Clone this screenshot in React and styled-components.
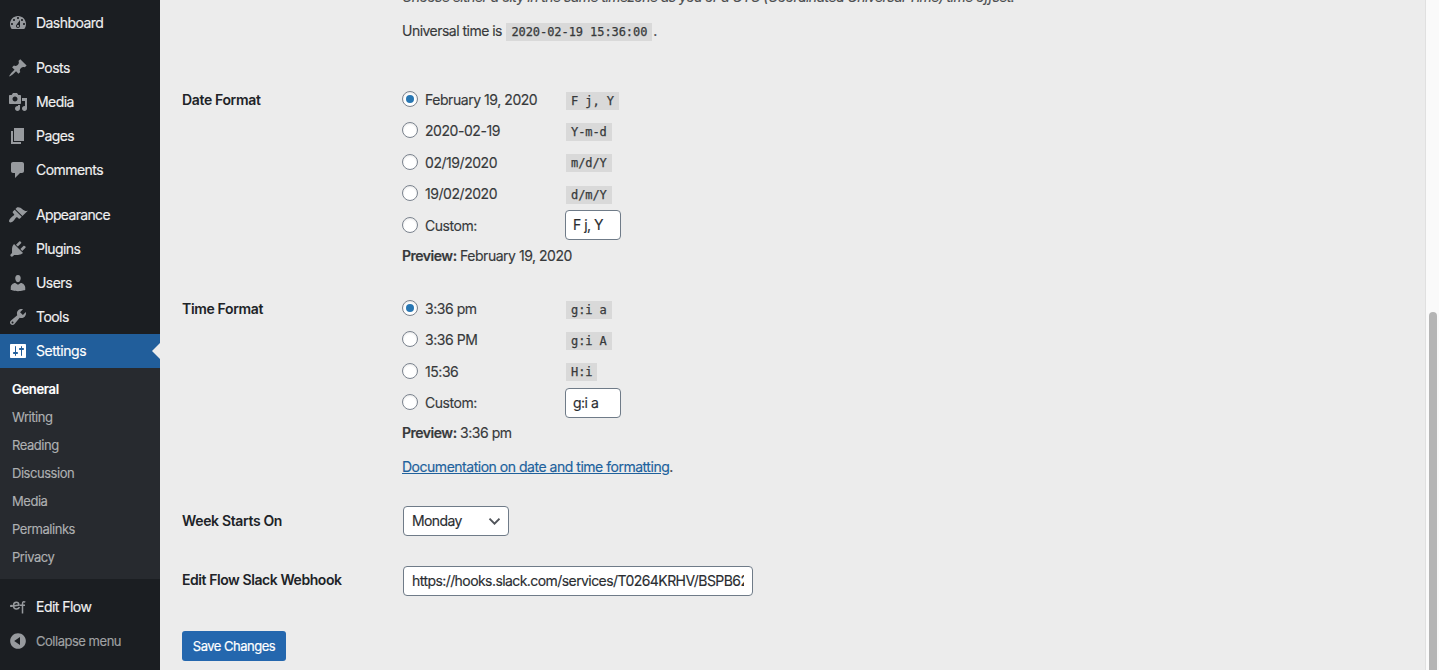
import React from 'react';
import styled, { createGlobalStyle, css } from 'styled-components';

const GlobalStyle = createGlobalStyle`
  * { box-sizing: border-box; }
  body {
    margin: 0;
    background: #ececec;
    color: #37393b;
    font-family: Inter, "Liberation Sans", sans-serif;
    font-size: 14px;
    line-height: 20px;
    letter-spacing: -0.48px;
    -webkit-text-stroke: 0.15px currentColor;
    overflow: hidden;
  }
`;

const Page = styled.div`
  display: flex;
  height: 670px;
  overflow: hidden;
`;

const Sidebar = styled.nav`
  flex: none;
  width: 160px;
  padding-top: 6px;
  background: #1b1e22;
`;

const MenuItem = styled.a`
  display: flex;
  align-items: center;
  position: relative;
  height: 34px;
  padding-left: 8px;
  gap: 8px;
  color: ${(p) => (p.$muted ? '#a0a2a4' : '#f0f0f1')};
  font-size: ${(p) => (p.$muted ? '13px' : '14px')};
  letter-spacing: ${(p) => p.$track || '-0.55px'};
  margin-top: ${(p) => (p.$spaced ? '11px' : '0')};
  ${(p) => p.$active && css`
    background: #215e9b;
    color: #fff;
    letter-spacing: -0.42px;
    &::after {
      content: '';
      position: absolute;
      right: 0;
      top: 9px;
      border: 8px solid transparent;
      border-right-color: #ececec;
      border-left: 0;
    }
  `}
`;

const MenuIcon = styled.svg`
  width: 20px;
  height: 20px;
  flex: none;
  fill: ${(p) => (p.$active ? '#fff' : '#979a9e')};
`;

const Submenu = styled.div`
  padding: 7px 0 8px;
  background: #272a2f;
`;

const SubItem = styled.a`
  display: block;
  padding: 4px 12px;
  height: 28px;
  font-size: 13px;
  letter-spacing: -0.46px;
  color: #aeb0b2;
  ${(p) => p.$current && css`
    color: #fff;
    font-weight: 600;
    letter-spacing: -0.3px;
  `}
`;

const Content = styled.main`
  flex: 1;
  padding-left: 22px;
  min-width: 0;
`;

const Description = styled.p`
  margin: -13px 0 0 220px;
  font-style: italic;
  color: #4c4e50;
  letter-spacing: -0.55px;
`;

const UniversalTime = styled.p`
  margin: 14px 0 0 220px;
  letter-spacing: -0.52px;
`;

const FormRow = styled.section`
  display: grid;
  grid-template-columns: 220px 1fr;
  margin-top: ${(p) => p.$top}px;
`;

const RowTitle = styled.h2`
  margin: ${(p) => p.$offset || 0}px 0 0;
  font-size: 14px;
  line-height: 20px;
  font-weight: 600;
  letter-spacing: ${(p) => p.$track || '-0.35px'};
  -webkit-text-stroke: 0;
  color: #202327;
`;

const Option = styled.label`
  display: flex;
  align-items: center;
  height: 31.4px;
`;

const Radio = styled.span`
  display: flex;
  align-items: center;
  justify-content: center;
  width: 16px;
  height: 16px;
  margin: -2px 7px 0 0;
  border: 1px solid #7a828d;
  border-radius: 50%;
  background: #fff;
  box-shadow: inset 0 1px 2px rgba(0, 0, 0, 0.1);
  &::after {
    content: '';
    width: 8px;
    height: 8px;
    border-radius: 50%;
    background: ${(p) => (p.$checked ? '#2877b3' : 'transparent')};
  }
`;

const OptionText = styled.span`
  width: 141px;
  letter-spacing: -0.45px;
`;

const Code = styled.code`
  display: inline-block;
  height: 18px;
  padding: 0 5px;
  margin: ${(p) => (p.$inline ? '0 1px' : '1.2px 0 0')};
  background: #d9d9d9;
  font-family: "DejaVu Sans Mono", monospace;
  font-size: 12px;
  line-height: 19px;
  letter-spacing: -0.07px;
  -webkit-text-stroke: 0.25px currentColor;
  white-space: pre;
`;

const Field = styled.div`
  height: 30px;
  width: ${(p) => p.$width}px;
  margin-left: ${(p) => p.$shift || 0}px;
  padding: 0 8px;
  display: flex;
  align-items: center;
  justify-content: space-between;
  border: 1px solid #6f7b88;
  border-radius: 4px;
  background: #fff;
  color: #2a2d31;
  letter-spacing: ${(p) => p.$track || '-0.5px'};
`;

const SmallField = styled(Field)`
  padding: 0 7px;
  margin-top: -0.8px;
`;

const FieldText = styled.span`
  flex: 1;
  overflow: hidden;
  white-space: nowrap;
`;

const Preview = styled.p`
  margin: 4.4px 0 0;
  strong { font-weight: 600; }
`;

const DocLine = styled.p`
  margin: 13.8px 0 0;
  a {
    color: #20619c;
    text-decoration: underline;
  }
`;

const SaveButton = styled.button`
  display: block;
  margin-top: 35px;
  width: 104px;
  height: 30px;
  padding: 0;
  border: 0;
  border-radius: 3px;
  background: #2467ae;
  color: #fff;
  font: 400 13px/30px Inter, sans-serif;
  letter-spacing: -0.5px;
  -webkit-text-stroke: 0.2px currentColor;
`;

const ScrollTrack = styled.div`
  flex: none;
  width: 14px;
  padding: 312px 0 0 3px;
  border-left: 1px solid #e0e0e0;
  background: #fafafa;
`;

const ScrollThumb = styled.div`
  width: 8px;
  height: 400px;
  border-radius: 4px;
  background: #b5b5b5;
`;

const icons = {
  dashboard: 'M3.76 16h12.48c1.1-1.37 1.76-3.11 1.76-5 0-4.42-3.58-8-8-8s-8 3.58-8 8c0 1.89.66 3.63 1.76 5zM10 4c.55 0 1 .45 1 1s-.45 1-1 1-1-.45-1-1 .45-1 1-1zM6 6c.55 0 1 .45 1 1s-.45 1-1 1-1-.45-1-1 .45-1 1-1zm8 0c.55 0 1 .45 1 1s-.45 1-1 1-1-.45-1-1 .45-1 1-1zm-5.37 5.55L12 7v6c0 1.1-.9 2-2 2s-2-.9-2-2c0-.57.24-1.08.63-1.45zM4 10c.55 0 1 .45 1 1s-.45 1-1 1-1-.45-1-1 .45-1 1-1zm12 0c.55 0 1 .45 1 1s-.45 1-1 1-1-.45-1-1 .45-1 1-1zm-5 3c0-.55-.45-1-1-1s-1 .45-1 1 .45 1 1 1 1-.45 1-1z',
  pin: 'M10.44 3.02l1.82-1.82 6.36 6.35-1.83 1.82c-1.05-.68-2.48-.57-3.41.36l-.75.75c-.92.93-1.04 2.35-.35 3.41l-1.83 1.82-2.41-2.41-2.8 2.79c-.42.42-3.38 2.71-3.8 2.29s1.86-3.39 2.28-3.81l2.79-2.79L4.1 9.36l1.83-1.82c1.05.69 2.48.57 3.4-.36l.75-.75c.93-.92 1.05-2.35.36-3.41z',
  media: 'M13 11V4c0-.55-.45-1-1-1h-1.67L9 1H5L3.67 3H2c-.55 0-1 .45-1 1v7c0 .55.45 1 1 1h10c.55 0 1-.45 1-1zM7 4.5c1.38 0 2.5 1.12 2.5 2.5S8.38 9.5 7 9.5 4.5 8.38 4.5 7 5.62 4.5 7 4.5zM14 6h5v10.5c0 1.38-1.12 2.5-2.5 2.5S14 17.88 14 16.5s1.12-2.5 2.5-2.5c.17 0 .34.02.5.05V9h-3V6zm-4 8.05V13h2v3.5c0 1.38-1.12 2.5-2.5 2.5S7 17.88 7 16.5 8.12 14 9.5 14c.17 0 .34.02.5.05z',
  page: 'M6 15V2h10v13H6zm-1 1h8v2H3V5h2v11z',
  comment: 'M5 2h9c1.1 0 2 .9 2 2v7c0 1.1-.9 2-2 2h-2l-5 5v-5H5c-1.1 0-2-.9-2-2V4c0-1.1.9-2 2-2z',
  appearance: 'M14.48 11.06L7.41 3.99l1.5-1.5c.5-.56 2.3-.47 3.51.32 1.21.8 1.43 1.28 2.91 2.1 1.18.64 2.45 1.26 4.45.85zm-.71.71L6.7 4.7 4.93 6.47c-.39.39-.39 1.02 0 1.41l1.06 1.06c.39.39.39 1.03 0 1.42-.6.6-1.43 1.11-2.21 1.69-.35.26-.7.53-1.01.84C1.43 14.23.4 16.08 1.4 17.07c.99 1 2.84-.03 4.18-1.36.31-.31.58-.66.85-1.02.57-.78 1.08-1.61 1.69-2.21.39-.39 1.02-.39 1.41 0l1.06 1.06c.39.39 1.02.39 1.41 0z',
  plugins: 'M13.11 4.36L9.87 7.6 8 5.73l3.24-3.24c.35-.34 1.05-.2 1.56.32.52.51.66 1.21.31 1.55zm-8 1.77l.91-1.12 9.01 9.01-1.19.84c-.71.71-2.63 1.16-3.82 1.16H6.14L4.9 17.26c-.59.59-1.54.59-2.12 0-.59-.58-.59-1.53 0-2.12l1.24-1.24v-3.88c0-1.13.4-3.19 1.09-3.89zm7.26 3.97l3.24-3.24c.34-.35 1.04-.21 1.55.31.52.51.66 1.21.31 1.55l-3.24 3.25z',
  users: 'M10 9.25c-2.27 0-2.73-3.44-2.73-3.44C7 4.02 7.82 2 9.97 2c2.16 0 2.98 2.02 2.71 3.81 0 0-.41 3.44-2.68 3.44zm0 2.57L12.72 10c2.39 0 4.52 2.33 4.52 4.53v2.49s-3.65 1.13-7.24 1.13c-3.65 0-7.24-1.13-7.24-1.13v-2.49c0-2.25 1.94-4.48 4.47-4.48z',
  tools: 'M16.68 9.77c-1.34 1.34-3.3 1.67-4.95.99l-5.41 6.52c-.99.99-2.59.99-3.58 0s-.99-2.59 0-3.57l6.52-5.42c-.68-1.65-.35-3.61.99-4.95 1.28-1.28 3.12-1.62 4.72-1.06l-2.89 2.89 2.82 2.82 2.86-2.87c.53 1.58.18 3.39-1.08 4.65zM3.81 16.21c.4.39 1.04.39 1.43 0 .4-.4.4-1.04 0-1.43-.39-.4-1.03-.4-1.43 0-.39.39-.39 1.03 0 1.43z',
  settings: 'M18 16V4c0-.55-.45-1-1-1H3c-.55 0-1 .45-1 1v12c0 .55.45 1 1 1h14c.55 0 1-.45 1-1zM8 11h1c.55 0 1 .45 1 1s-.45 1-1 1H8v1.5c0 .28-.22.5-.5.5s-.5-.22-.5-.5V13H6c-.55 0-1-.45-1-1s.45-1 1-1h1V5.5c0-.28.22-.5.5-.5s.5.22.5.5V11zm5-2h-1c-.55 0-1-.45-1-1s.45-1 1-1h1V5.5c0-.28.22-.5.5-.5s.5.22.5.5V7h1c.55 0 1 .45 1 1s-.45 1-1 1h-1v5.5c0 .28-.22.5-.5.5s-.5-.22-.5-.5V9z',
  collapse: 'M10 2.16c4.33 0 7.84 3.51 7.84 7.84s-3.51 7.84-7.84 7.84S2.16 14.33 2.16 10 5.71 2.16 10 2.16zm2 11.72V6.12L6.18 9.97z',
};

const menu = [
  { label: 'Dashboard', icon: 'dashboard' },
  { label: 'Posts', icon: 'pin', spaced: true },
  { label: 'Media', icon: 'media' },
  { label: 'Pages', icon: 'page' },
  { label: 'Comments', icon: 'comment' },
  { label: 'Appearance', icon: 'appearance', spaced: true, track: '-0.66px' },
  { label: 'Plugins', icon: 'plugins' },
  { label: 'Users', icon: 'users' },
  { label: 'Tools', icon: 'tools' },
  { label: 'Settings', icon: 'settings', active: true },
];

const submenu = ['General', 'Writing', 'Reading', 'Discussion', 'Media', 'Permalinks', 'Privacy'];

const dateOptions = [
  ['February 19, 2020', 'F j, Y'],
  ['2020-02-19', 'Y-m-d'],
  ['02/19/2020', 'm/d/Y'],
  ['19/02/2020', 'd/m/Y'],
];

const timeOptions = [
  ['3:36 pm', 'g:i a'],
  ['3:36 PM', 'g:i A'],
  ['15:36', 'H:i'],
];

function FormatOptions({ options, custom, preview }) {
  return (
    <div>
      {options.map(([text, code], i) => (
        <Option key={code}>
          <Radio $checked={i === 0} />
          <OptionText>{text}</OptionText>
          <Code>{code}</Code>
        </Option>
      ))}
      <Option>
        <Radio />
        <OptionText>Custom:</OptionText>
        <SmallField $width={56} $shift={-1}>
          <FieldText>{custom}</FieldText>
        </SmallField>
      </Option>
      <Preview><strong>Preview:</strong> {preview}</Preview>
    </div>
  );
}

export default function App() {
  return (
    <Page>
      <GlobalStyle />
      <Sidebar>
        {menu.map((m) => (
          <MenuItem key={m.label} $spaced={m.spaced} $active={m.active} $track={m.track}>
            <MenuIcon viewBox="0 0 20 20" $active={m.active}><path d={icons[m.icon]} /></MenuIcon>
            {m.label}
          </MenuItem>
        ))}
        <Submenu>
          {submenu.map((s, i) => <SubItem key={s} $current={i === 0}>{s}</SubItem>)}
        </Submenu>
        <MenuItem $spaced $track="-0.53px">
          <MenuIcon viewBox="0 0 20 20">
            <g fill="none" stroke="#979a9e" strokeWidth="1.5">
              <path d="M2.4 8.9H5.4L11 8.1C10.8 6.3 9.7 5.3 8.4 5.3C6.7 5.3 5.5 6.7 5.5 8.7C5.5 10.7 6.7 12 8.5 12C9.9 12 10.9 11.3 11.5 10.2" />
              <path d="M17.3 5.2C15.5 4.2 14.5 5 14.5 7V16.4M12 8.3H17" />
            </g>
            <circle cx="3.3" cy="8.9" r="1.2" />
          </MenuIcon>
          Edit Flow
        </MenuItem>
        <MenuItem $muted $track="-0.48px">
          <MenuIcon viewBox="0 0 20 20"><path d={icons.collapse} /></MenuIcon>
          Collapse menu
        </MenuItem>
      </Sidebar>
      <Content>
        <Description>
          Choose either a city in the same timezone as you or a UTC (Coordinated Universal Time) time offset.
        </Description>
        <UniversalTime>
          Universal time is <Code $inline>2020-02-19 15:36:00</Code>.
        </UniversalTime>
        <FormRow $top={43.35}>
          <RowTitle $offset={5.65}>Date Format</RowTitle>
          <FormatOptions options={dateOptions} custom="F j, Y" preview="February 19, 2020" />
        </FormRow>
        <FormRow $top={27.6}>
          <RowTitle $offset={5.6}>Time Format</RowTitle>
          <div>
            <FormatOptions options={timeOptions} custom="g:i a" preview="3:36 pm" />
            <DocLine><a>Documentation on date and time formatting</a>.</DocLine>
          </div>
        </FormRow>
        <FormRow $top={29}>
          <RowTitle $offset={5}>Week Starts On</RowTitle>
          <Field $width={106} $shift={1} $track="-0.6px">
            Monday
            <svg width="12" height="8" viewBox="0 0 12 8" fill="none" stroke="#50545a" strokeWidth="1.9">
              <path d="M1.5 1.7L6.5 6.7L11.5 1.7" />
            </svg>
          </Field>
        </FormRow>
        <FormRow $top={30}>
          <RowTitle $offset={4} $track="-0.43px">Edit Flow Slack Webhook</RowTitle>
          <Field $width={350} $shift={1} $track="-0.57px">
            <FieldText>https://hooks.slack.com/services/T0264KRHV/BSPB62</FieldText>
          </Field>
        </FormRow>
        <SaveButton>Save Changes</SaveButton>
      </Content>
      <ScrollTrack><ScrollThumb /></ScrollTrack>
    </Page>
  );
}
